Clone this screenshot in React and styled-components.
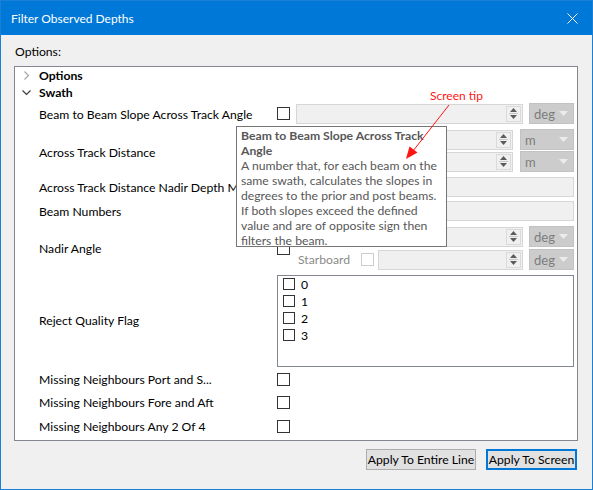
import React from 'react'
import styled, { createGlobalStyle } from 'styled-components'

const GlobalStyle = createGlobalStyle`
  html, body { margin: 0; padding: 0; background: #ffffff; }
  body { font-family: Lato, 'Liberation Sans', sans-serif; font-size: 12.2px; color: #000; }
  * { box-sizing: border-box; }
`

const Window = styled.div`
  position: relative;
  width: 593px;
  height: 490px;
  border: 1px solid #1c7fd6;
  background: #f0f0f0;
  display: flex;
  flex-direction: column;
`

const TitleBar = styled.div`
  height: 34px;
  flex: none;
  background: #0078d7;
  color: #ffffff;
  display: flex;
  align-items: center;
  justify-content: space-between;
  padding: 0 14px 0 10px;
  font-size: 12px;
`

const Body = styled.div`
  flex: 1;
  display: flex;
  flex-direction: column;
  padding: 0 14px 0 13px;
`

const OptionsLabel = styled.div`
  padding-top: 9px;
  line-height: 16px;
  height: 31px;
  padding-left: 1px;
`

const Panel = styled.div`
  height: 375px;
  border: 1px solid #828790;
  background: #ffffff;
  display: flex;
  flex-direction: column;
  overflow: hidden;
`

const Row = styled.div`
  height: ${p => p.$h}px;
  flex: none;
  display: flex;
  align-items: center;
`

const TreeRow = styled.div`
  height: 17px;
  display: flex;
  align-items: center;
  font-weight: bold;
`

const Chevron = styled.svg`
  width: 9px;
  height: 9px;
  margin: 0 8px 0 7px;
  flex: none;
`

const LabelCell = styled.div`
  width: 262px;
  flex: none;
  padding: ${p => p.$drop || 0}px 2px 0 24px;
  white-space: nowrap;
  overflow: hidden;
`

const ControlCell = styled.div`
  flex: 1;
  display: flex;
  align-items: center;
  gap: ${p => p.$gap ?? 6}px;
  padding-right: 3px;
  height: 100%;
`

const Check = styled.span`
  width: ${p => p.$size || 13}px;
  height: ${p => p.$size || 13}px;
  flex: none;
  border: 1px solid ${p => (p.$disabled ? '#cccccc' : '#333333')};
  background: #ffffff;
`

const SubColumn = styled.div`
  flex: 1;
  display: flex;
  flex-direction: column;
  gap: ${p => p.$gap}px;
`

const SubRow = styled.div`
  display: flex;
  align-items: center;
  gap: ${p => p.$gap ?? 6}px;
  height: 20px;
`

const SubLabel = styled.span`
  width: ${p => p.$w}px;
  flex: none;
  color: #8a8a8a;
`

const SpinBox = styled.div`
  flex: 1;
  height: 20px;
  background: #f0f0f0;
  border: 1px solid #d6d6d6;
  display: flex;
  justify-content: flex-end;
  padding: 1px;
`

const Spinner = styled.div`
  width: 15px;
  border: 1px solid #dadada;
  display: flex;
  flex-direction: column;
  align-items: center;
  justify-content: space-evenly;
`

const TextBox = styled.div`
  flex: 1;
  height: 20px;
  background: #f0f0f0;
  border: 1px solid #d6d6d6;
`

const Combo = styled.div`
  width: ${p => p.$w || 45}px;
  height: 21px;
  flex: none;
  background: #cccccc;
  border: 1px solid #c2c2c2;
  color: #7c7c7c;
  display: flex;
  align-items: center;
  justify-content: space-between;
  padding: 0 5px 0 4px;
  font-size: 13px;
`

const ListBox = styled.div`
  flex: 1;
  height: 92px;
  border: 1px solid #828790;
  background: #ffffff;
  padding: 0 0 0 5px;
`

const ListItem = styled.div`
  height: 17px;
  display: flex;
  align-items: center;
  gap: 6px;
`

const Footer = styled.div`
  margin-top: 8px;
  display: flex;
  justify-content: flex-end;
  gap: 10px;
  padding-right: 1px;
`

const Button = styled.button`
  width: ${p => p.$w}px;
  height: 21px;
  font-family: inherit;
  font-size: 12.2px;
  color: #000;
  background: #e1e1e1;
  border: ${p => (p.$default ? '2px solid #0078d7' : '1px solid #adadad')};
  padding: 0;
`

const Tooltip = styled.div`
  position: absolute;
  left: 235px;
  top: 125px;
  width: 211px;
  height: 121px;
  background: #ffffff;
  border: 1px solid #767676;
  padding: 1px 4px;
  color: #575757;
  line-height: 15px;
`

const TipTitle = styled.div`
  font-weight: bold;
`

const TipLine = styled.div`
  white-space: nowrap;
`

const Annotation = styled.div`
  position: absolute;
  left: 429px;
  top: 87px;
  color: #ff1414;
  font-size: 12px;
  line-height: 16px;
`

const ArrowSvg = styled.svg`
  position: absolute;
  left: 399px;
  top: 99px;
  width: 60px;
  height: 70px;
`

const SpinArrows = () => (
  <Spinner>
    <svg width="7" height="4" viewBox="0 0 7 4"><path d="M0 4 L3.5 0 L7 4 Z" fill="#5c5c5c" /></svg>
    <svg width="9" height="1" viewBox="0 0 9 1"><rect width="9" height="1" fill="#c8c8c8" /></svg>
    <svg width="7" height="4" viewBox="0 0 7 4"><path d="M0 0 L3.5 4 L7 0 Z" fill="#5c5c5c" /></svg>
  </Spinner>
)

const DropArrow = () => (
  <svg width="9" height="5" viewBox="0 0 9 5"><path d="M0 0 L9 0 L4.5 5 Z" fill="#ececec" /></svg>
)

const UnitCombo = ({ unit, w }) => (
  <Combo $w={w}><span>{unit}</span><DropArrow /></Combo>
)

export default function App () {
  return (
    <>
      <GlobalStyle />
      <Window>
        <TitleBar>
          <span>Filter Observed Depths</span>
          <svg width="11" height="11" viewBox="0 0 11 11">
            <path d="M0.5 0.5 L10.5 10.5 M10.5 0.5 L0.5 10.5" stroke="#ffffff" strokeWidth="1" />
          </svg>
        </TitleBar>
        <Body>
          <OptionsLabel>Options:</OptionsLabel>
          <Panel>
            <TreeRow>
              <Chevron viewBox="0 0 9 9"><polyline points="2.5,0.5 6.5,4.5 2.5,8.5" fill="none" stroke="#a6a6a6" strokeWidth="1.2" /></Chevron>
              Options
            </TreeRow>
            <TreeRow>
              <Chevron viewBox="0 0 9 9"><polyline points="0.5,2.5 4.5,6.5 8.5,2.5" fill="none" stroke="#3c3c3c" strokeWidth="1.2" /></Chevron>
              Swath
            </TreeRow>

            <Row $h={25}>
              <LabelCell $drop={1}>Beam to Beam Slope Across Track Angle</LabelCell>
              <ControlCell>
                <Check />
                <SpinBox><SpinArrows /></SpinBox>
                <UnitCombo unit="deg" />
              </ControlCell>
            </Row>

            <Row $h={49}>
              <LabelCell $drop={3}>Across Track Distance</LabelCell>
              <ControlCell $gap={8}>
                <Check />
                <SubColumn $gap={2}>
                  <SubRow $gap={7}>
                    <SubLabel $w={40} />
                    <SpinBox><SpinArrows /></SpinBox>
                    <UnitCombo unit="m" w={54} />
                  </SubRow>
                  <SubRow $gap={7}>
                    <SubLabel $w={40} />
                    <SpinBox><SpinArrows /></SpinBox>
                    <UnitCombo unit="m" w={54} />
                  </SubRow>
                </SubColumn>
              </ControlCell>
            </Row>

            <Row $h={24}>
              <LabelCell>Across Track Distance Nadir Depth Multiplier</LabelCell>
              <ControlCell>
                <Check />
                <TextBox />
              </ControlCell>
            </Row>

            <Row $h={24}>
              <LabelCell>Beam Numbers</LabelCell>
              <ControlCell>
                <Check />
                <TextBox />
              </ControlCell>
            </Row>

            <Row $h={50}>
              <LabelCell $drop={1}>Nadir Angle</LabelCell>
              <ControlCell $gap={8}>
                <Check />
                <SubColumn $gap={3}>
                  <SubRow>
                    <SubLabel $w={57} />
                    <Check $disabled style={{ marginRight: -2 }} />
                    <SpinBox><SpinArrows /></SpinBox>
                    <UnitCombo unit="deg" />
                  </SubRow>
                  <SubRow>
                    <SubLabel $w={57}>Starboard</SubLabel>
                    <Check $disabled style={{ marginRight: -2 }} />
                    <SpinBox><SpinArrows /></SpinBox>
                    <UnitCombo unit="deg" />
                  </SubRow>
                </SubColumn>
              </ControlCell>
            </Row>

            <Row $h={95}>
              <LabelCell>Reject Quality Flag</LabelCell>
              <ControlCell>
                <ListBox>
                  {['0', '1', '2', '3'].map(v => (
                    <ListItem key={v}><Check $size={12} />{v}</ListItem>
                  ))}
                </ListBox>
              </ControlCell>
            </Row>

            <Row $h={23}>
              <LabelCell>Missing Neighbours Port and S...</LabelCell>
              <ControlCell><Check /></ControlCell>
            </Row>
            <Row $h={23}>
              <LabelCell>Missing Neighbours Fore and Aft</LabelCell>
              <ControlCell><Check /></ControlCell>
            </Row>
            <Row $h={24}>
              <LabelCell>Missing Neighbours Any 2 Of 4</LabelCell>
              <ControlCell><Check /></ControlCell>
            </Row>
          </Panel>
          <Footer>
            <Button $w={110}>Apply To Entire Line</Button>
            <Button $w={91} $default>Apply To Screen</Button>
          </Footer>
        </Body>

        <Tooltip>
          <TipTitle>
            <TipLine>Beam to Beam Slope Across Track</TipLine>
            <TipLine>Angle</TipLine>
          </TipTitle>
          <TipLine>A number that, for each beam on the</TipLine>
          <TipLine>same swath, calculates the slopes in</TipLine>
          <TipLine>degrees to the prior and post beams.</TipLine>
          <TipLine>If both slopes exceed the defined</TipLine>
          <TipLine>value and are of opposite sign then</TipLine>
          <TipLine>filters the beam.</TipLine>
        </Tooltip>

        <Annotation>Screen tip</Annotation>
        <ArrowSvg viewBox="0 0 60 70">
          <line x1="49" y1="5" x2="13" y2="51" stroke="#ff1414" strokeWidth="1" />
          <polygon points="6,59 9.5,46.5 17.5,52.5" fill="#ff1414" />
        </ArrowSvg>
      </Window>
    </>
  )
}
